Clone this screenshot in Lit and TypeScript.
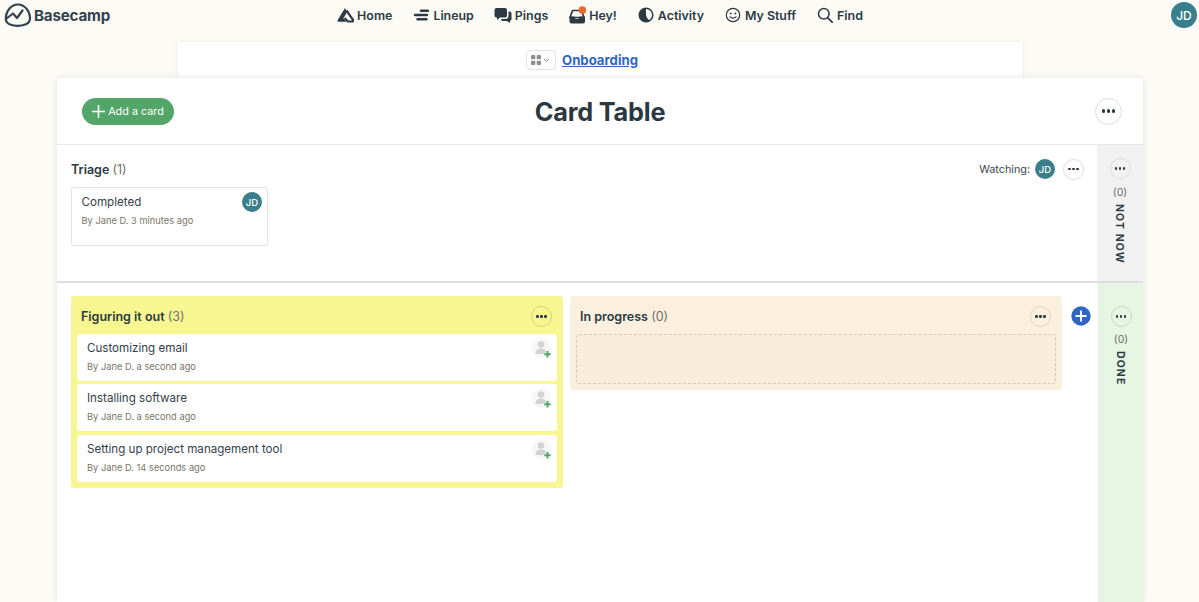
import { LitElement, html, css, svg } from "lit";
import { customElement } from "lit/decorators.js";

const ICONS: Record<string, unknown> = {
  home: svg`<path d="M8 1 .6 13.300a1 1 0 0 0 .9 1.500h8.200L6.300 11.500 10 5.200Z" fill="currentColor"/><path d="M9.500 3.500 16 12.800a1 1 0 0 1-.7 1.700H11L7.500 11" fill="none" stroke="currentColor" stroke-width="2.200" stroke-linejoin="round"/>`,
  lineup: svg`<g fill="none" stroke="currentColor" stroke-width="2.400" stroke-linecap="round"><path d="M8 3.700h7M2 8h12M4.500 12.300h9"/></g>`,
  pings: svg`<path d="M2.500 1h8.500a2 2 0 0 1 2 2v5.500a2 2 0 0 1-2 2H6l-3 2.500v-2.500H2.500a2 2 0 0 1-2-2V3a2 2 0 0 1 2-2Z" fill="currentColor"/><path d="M14.500 4.500H15.500a2 2 0 0 1 2 2v5.500a2 2 0 0 1-1.500 2v2l-3-2H8.500a2 2 0 0 1-1.500-2h4.500a3 3 0 0 0 3-3Z" fill="currentColor"/>`,
  hey: svg`<path d="M3.500 4.500h9l2.500 7H1Z" fill="none" stroke="currentColor" stroke-width="1.700" stroke-linejoin="round"/><path d="M.5 10.500h5a2.500 2.500 0 0 0 5 0h5.500v5a2 2 0 0 1-2 2H2.500a2 2 0 0 1-2-2Z" fill="currentColor"/><circle cx="13.300" cy="4" r="3.800" fill="#ea6a2d"/>`,
  activity: svg`<circle cx="8" cy="8" r="6.800" fill="none" stroke="currentColor" stroke-width="1.500"/><path d="M8 1.200a6.800 6.800 0 1 0 4 12.300A7.500 7.500 0 0 1 8 8Z" fill="currentColor"/>`,
  stuff: svg`<circle cx="8" cy="8" r="6.700" fill="none" stroke="currentColor" stroke-width="1.200"/><circle cx="5.700" cy="6.500" r=".9" fill="currentColor"/><circle cx="10.300" cy="6.500" r=".9" fill="currentColor"/><path d="M5 9.800c1.500 1.700 4.500 1.700 6 0" fill="none" stroke="currentColor" stroke-width="1.200" stroke-linecap="round"/>`,
  find: svg`<circle cx="6.800" cy="6.800" r="5.300" fill="none" stroke="currentColor" stroke-width="1.500"/><path d="m10.800 10.800 4.500 4.500" fill="none" stroke="currentColor" stroke-width="1.700" stroke-linecap="round"/>`,
};

const NAV = [
  { id: "home", label: "Home", w: 17, h: 16 },
  { id: "lineup", label: "Lineup", w: 16, h: 16 },
  { id: "pings", label: "Pings", w: 18, h: 17 },
  { id: "hey", label: "Hey!", w: 17, h: 18 },
  { id: "activity", label: "Activity", w: 16, h: 16 },
  { id: "stuff", label: "My Stuff", w: 16, h: 16 },
  { id: "find", label: "Find", w: 16, h: 16 },
];

const CARDS = [
  { title: "Customizing email", meta: "By Jane D. a second ago" },
  { title: "Installing software", meta: "By Jane D. a second ago" },
  { title: "Setting up project management tool", meta: "By Jane D. 14 seconds ago" },
];

@customElement("app-root")
export class AppRoot extends LitElement {
  static styles = css`
    :host {
      display: flex;
      flex-direction: column;
      height: 602px;
      overflow: hidden;
      background: #fdfbf6;
      font-family: Inter, "Noto Sans", sans-serif;
      color: #2c3a44;
    }
    * { box-sizing: border-box; }
    .nav {
      height: 42px;
      flex: none;
      display: grid;
      grid-template-columns: 1fr auto 1fr;
      align-items: start;
    }
    .brand {
      display: flex;
      align-items: center;
      gap: 2px;
      padding: 2px 0 0 4px;
      height: 28px;
      font-size: 15.2px;
      font-weight: 700;
      letter-spacing: -0.2px;
      color: #33424d;
    }
    .brand svg { width: 28px; height: 25px; }
    .menu {
      display: flex;
      gap: 20px;
      height: 30px;
      align-items: center;
    }
    .item {
      display: flex;
      align-items: center;
      gap: 3px;
      font-size: 12.4px;
      font-weight: 600;
      color: #2c3a44;
    }
    .item .ic { width: 18px; height: 18px; display: flex; align-items: center; justify-content: center; }
    .right { display: flex; justify-content: flex-end; padding: 2px 2px 0 0; }
    .avatar {
      border-radius: 50%;
      background: #3a7f8c;
      color: #fff;
      display: flex;
      align-items: center;
      justify-content: center;
      font-weight: 500;
      flex: none;
    }
    .avatar.lg { width: 26px; height: 26px; font-size: 12px; }
    .avatar.sm { width: 20px; height: 20px; font-size: 9.5px; }
    .crumb {
      flex: none;
      width: 844px;
      height: 36px;
      margin-left: 178px;
      background: #fff;
      box-shadow: 0 0 4px rgba(60, 50, 30, 0.1);
      display: grid;
      grid-template-columns: 1fr auto 1fr;
      align-items: center;
      column-gap: 6px;
    }
    .switch {
      justify-self: end;
      width: 30px;
      height: 20px;
      border: 1px solid #e3e3e3;
      border-radius: 4px;
      display: flex;
      align-items: center;
      justify-content: center;
      gap: 2px;
    }
    .crumb a {
      color: #2f66c4;
      font-size: 13.2px;
      font-weight: 700;
      text-decoration: underline;
    }
    .sheet {
      flex: 1;
      width: 1086px;
      margin-left: 57px;
      background: #fff;
      box-shadow: 0 0 6px rgba(60, 50, 30, 0.12);
      display: flex;
      flex-direction: column;
      min-height: 0;
      border-radius: 3px 3px 0 0;
    }
    .head {
      flex: none;
      height: 67px;
      border-bottom: 1px solid #e9e9e9;
      display: grid;
      grid-template-columns: 1fr auto 1fr;
      align-items: center;
      padding: 0 21px;
    }
    .add {
      justify-self: start;
      margin-left: 4px;
      height: 27px;
      width: 92px;
      padding-top: 1.5px;
      border-radius: 14px;
      background: #54a668;
      color: #fff;
      font-size: 10.8px;
      display: flex;
      align-items: center;
      justify-content: center;
      gap: 3px;
    }
    h1 {
      margin: 0;
      font-size: 25.3px;
      font-weight: 700;
      letter-spacing: -0.2px;
      color: #2c3841;
    }
    .dots {
      border-radius: 50%;
      border: 1px solid #dcdcdc;
      background: transparent;
      display: flex;
      align-items: center;
      justify-content: center;
      gap: 1.5px;
      flex: none;
    }
    .dots i { border-radius: 50%; background: #2c3a44; display: block; }
    .dots.big { width: 27px; height: 27px; justify-self: end; }
    .dots.big i { width: 3.5px; height: 3.5px; }
    .dots.small { width: 21px; height: 21px; }
    .dots.small i { width: 2.5px; height: 2.5px; }
    .dots.onyellow { border-color: #d3d17f; }
    .dots.onpeach { border-color: #dcd2c0; }
    .dots.ongreen { border-color: #c8d6c4; }
    .row {
      display: grid;
      grid-template-columns: 1fr 46px;
    }
    .row.top { height: 138px; flex: none; border-bottom: 2px solid #dedede; }
    .row.bottom { flex: 1; min-height: 0; }
    .triage { padding: 14px 13px 0 14px; }
    .triage-head { display: flex; align-items: center; height: 20px; justify-content: space-between; }
    .col-title { font-size: 12.5px; font-weight: 600; color: #2c3a44; }
    .col-title span { font-weight: 400; color: #6f6f6a; }
    .watch { display: flex; align-items: center; font-size: 10.8px; color: #3b4750; }
    .watch .avatar { margin-left: 5px; margin-right: 8px; }
    .triage-card {
      width: 197px;
      height: 59px;
      margin-top: 8px;
      border: 1px solid #e3e3e3;
      border-radius: 3px;
      padding: 6px 9.5px;
      position: relative;
    }
    .t { font-size: 11.6px; line-height: 16px; color: #33414b; }
    .m { font-size: 9.3px; line-height: 12px; color: #7c7565; margin-top: 5px; }
    .triage-card .avatar { position: absolute; top: 4px; right: 5px; }
    .side {
      display: flex;
      flex-direction: column;
      align-items: center;
      padding-top: 13px;
    }
    .side.grey { background: #f1f1f1; }
    .side.green { background: #e6f6e2; padding-top: 23px; }
    .cnt { font-size: 10.5px; color: #6f6f6a; margin-top: 7px; line-height: 14px; }
    .side.green .cnt { margin-top: 6px; }
    .vert {
      writing-mode: vertical-rl;
      font-size: 10.5px;
      font-weight: 700;
      letter-spacing: 1.1px;
      margin: 4px 2px 0 0;
      color: #2c3a44;
    }
    .board {
      display: flex;
      align-items: flex-start;
      padding: 13px 7px 0 14px;
      gap: 7px;
    }
    .col { width: 492px; border-radius: 3px; padding: 0 6px 6px; flex: none; }
    .col.y { background: #f8f691; }
    .col.p { background: #fbf0de; }
    .col-head {
      height: 37.8px;
      padding: 3px 0 0 4px;
      display: flex;
      align-items: center;
      justify-content: space-between;
    }
    .col-head .dots { margin-right: 5px; }
    .cards { display: flex; flex-direction: column; gap: 3.5px; }
    .card {
      height: 47px;
      background: #fff;
      border-radius: 3px;
      padding: 6px 10px;
      position: relative;
    }
    .assign { position: absolute; top: 4px; right: 4px; width: 22px; height: 22px; }
    .drop {
      height: 50px;
      border: 1px dashed #d8cbb5;
      border-radius: 3px;
      background: #f9ecd9;
    }
    .plus {
      width: 20px;
      height: 20px;
      margin: 9.5px 0 0 2px;
      flex: none;
    }
  `;

  private dots(cls: string) {
    return html`<span class="dots ${cls}"><i></i><i></i><i></i></span>`;
  }

  render() {
    return html`
      <div class="nav">
        <div class="brand">
          <svg viewBox="0 0 28 25">
            <path d="M1.8 15.5C2 7.5 7.500 1.500 14 1.500c6.500 0 11.500 6 12 13 .2 3.500-1 5.500-4 6.700-5 2-11.500 2-16 .3-3-1.200-4.300-3-4.200-6Z" fill="none" stroke="#33424d" stroke-width="2.2" stroke-linejoin="round"/>
            <path d="M2.500 15.500 9 10.500l4 4.500 5.500-7.500" fill="none" stroke="#33424d" stroke-width="2.2" stroke-linecap="round" stroke-linejoin="round"/>
          </svg>
          Basecamp
        </div>
        <div class="menu">
          ${NAV.map(
            (n) => html`<div class="item">
              <span class="ic"><svg width=${n.w} height=${n.h} viewBox="0 0 ${n.w} ${n.h}">${ICONS[n.id]}</svg></span>
              ${n.label}
            </div>`
          )}
        </div>
        <div class="right"><div class="avatar lg">JD</div></div>
      </div>

      <div class="crumb">
        <span class="switch">
          <svg width="10" height="10" viewBox="0 0 10 10" fill="#8f8f8f"><rect width="4.3" height="4.3" rx=".8"/><rect x="5.7" width="4.3" height="4.3" rx=".8"/><rect y="5.7" width="4.3" height="4.3" rx=".8"/><rect x="5.7" y="5.7" width="4.3" height="4.3" rx=".8"/></svg>
          <svg width="7" height="5" viewBox="0 0 7 5"><path d="m1 1 2.500 2.500L6 1" fill="none" stroke="#8f8f8f"/></svg>
        </span>
        <a>Onboarding</a>
      </div>

      <div class="sheet">
        <div class="head">
          <div class="add">
            <svg width="13" height="13" viewBox="0 0 13 13"><path d="M6.500.5v12M.5 6.500h12" stroke="#fff" stroke-width="1.6" stroke-linecap="round"/></svg>
            Add a card
          </div>
          <h1>Card Table</h1>
          ${this.dots("big")}
        </div>

        <div class="row top">
          <div class="triage">
            <div class="triage-head">
              <div class="col-title">Triage <span>(1)</span></div>
              <div class="watch">Watching:
                <div class="avatar sm">JD</div>
                ${this.dots("small")}
              </div>
            </div>
            <div class="triage-card">
              <div class="t">Completed</div>
              <div class="m">By Jane D. 3 minutes ago</div>
              <div class="avatar sm">JD</div>
            </div>
          </div>
          <div class="side grey">
            ${this.dots("small")}
            <div class="cnt">(0)</div>
            <div class="vert">NOT NOW</div>
          </div>
        </div>

        <div class="row bottom">
          <div class="board">
            <div class="col y">
              <div class="col-head">
                <div class="col-title">Figuring it out <span>(3)</span></div>
                ${this.dots("small onyellow")}
              </div>
              <div class="cards">
                ${CARDS.map(
                  (c) => html`<div class="card">
                    <div class="t">${c.title}</div>
                    <div class="m">${c.meta}</div>
                    <svg class="assign" viewBox="0 0 22 22">
                      <circle cx="10.5" cy="10" r="10" fill="#f7f7f7"/>
                      <circle cx="10" cy="6.500" r="3.300" fill="#d2d2d2"/>
                      <path d="M4.500 16c0-4 2.500-5.500 5.500-5.500s5 1.500 5 3.500l-3 2Z" fill="#d2d2d2"/>
                      <path d="M16.500 13v6.500M13.300 16.300h6.400" stroke="#4fa565" stroke-width="1.9"/>
                    </svg>
                  </div>`
                )}
              </div>
            </div>
            <div class="col p">
              <div class="col-head">
                <div class="col-title">In progress <span>(0)</span></div>
                ${this.dots("small onpeach")}
              </div>
              <div class="drop"></div>
            </div>
            <svg class="plus" viewBox="0 0 20 20">
              <circle cx="10" cy="10" r="9.7" fill="#2f66c4"/>
              <path d="M10 4.500v11M4.500 10h11" stroke="#fff" stroke-width="2"/>
            </svg>
          </div>
          <div class="side green">
            ${this.dots("small ongreen")}
            <div class="cnt">(0)</div>
            <div class="vert">DONE</div>
          </div>
        </div>
      </div>
    `;
  }
}
